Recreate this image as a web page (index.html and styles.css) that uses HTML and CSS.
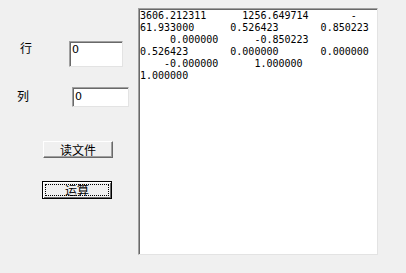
FILE: index.html
```html
<!DOCTYPE html>
<html lang="zh">
<head>
  <meta charset="UTF-8">
  <title>矩阵运算</title>
  <link rel="stylesheet" href="styles.css">
</head>
<body>
  <div class="ventana">
    <!-- Panel izquierdo: filas, columnas y botones -->
    <div class="panel">
      <div class="fila fila-hang">
        <span class="etiqueta">行</span>
        <input class="edit edit-alto" value="0">
      </div>
      <div class="fila fila-lie">
        <span class="etiqueta">列</span>
        <input class="edit edit-bajo" value="0">
      </div>
      <button class="boton boton-leer">读文件</button>
      <button class="boton boton-calc">运算</button>
    </div>
    <!-- Resultado -->
    <div class="salida">3606.212311      1256.649714       -
61.933000      0.526423       0.850223
     0.000000      -0.850223
0.526423       0.000000       0.000000
    -0.000000      1.000000
1.000000</div>
  </div>
</body>
</html>
```

FILE: styles.css
```css
/* Reset básico */
* {
  margin: 0;
  padding: 0;
  box-sizing: border-box;
}
body {
  background-color: #f0f0f0;
  font-family: "Noto Sans CJK SC", sans-serif;
  font-size: 12px;
  color: #000;
  width: 406px;
  height: 273px;
  overflow: hidden;
}
.ventana {
  display: flex;
  align-items: flex-start;
}
/* Panel de controles */
.panel {
  width: 138px;
  display: flex;
  flex-direction: column;
  align-items: flex-start;
}
.fila {
  display: flex;
  align-items: flex-start;
}
.fila-hang {
  margin-top: 41px;
}
.fila-lie {
  margin-top: 20px;
}
.etiqueta {
  width: 12px;
  line-height: 14px;
}
.fila-hang .etiqueta {
  margin-left: 20px;
  margin-top: 0;
}
.fila-lie .etiqueta {
  margin-left: 17px;
  margin-top: 2px;
}
/* Cajas de texto hundidas */
.edit {
  font-family: "DejaVu Sans", sans-serif;
  font-size: 11px;
  color: #000;
  background: #fff;
  border-top: 1px solid #a0a0a0;
  border-left: 1px solid #a0a0a0;
  border-right: 1px solid #e3e3e3;
  border-bottom: 1px solid #e3e3e3;
  box-shadow: inset 1px 1px 0 #696969;
  padding: 0 0 0 2px;
  outline: none;
}
.edit-alto {
  margin-left: 37px;
  width: 54px;
  height: 26px;
  padding-bottom: 10px;
}
.edit-bajo {
  margin-left: 43px;
  width: 57px;
  height: 20px;
  padding-bottom: 2px;
}
/* Botones */
.boton {
  font-family: "Noto Sans CJK SC", sans-serif;
  font-size: 12px;
  color: #000;
  width: 70px;
  background: #f0f0f0;
  border-top: 1px solid #fff;
  border-left: 1px solid #fff;
  border-right: 1px solid #696969;
  border-bottom: 1px solid #696969;
  box-shadow: inset -1px -1px 0 #a0a0a0;
  line-height: 14px;
}
.boton-leer {
  margin-top: 34px;
  margin-left: 43px;
  height: 17px;
}
.boton-calc {
  margin-top: 23px;
  margin-left: 42px;
  height: 18px;
  border: 1px solid #000;
  box-shadow: inset 1px 1px 0 #fff, inset -1px -1px 0 #696969;
  outline: 1px dotted #000;
  outline-offset: -4px;
}
/* Área de resultados */
.salida {
  margin-top: 8px;
  width: 240px;
  height: 247px;
  background: #fff;
  border-top: 1px solid #a0a0a0;
  border-left: 1px solid #a0a0a0;
  border-right: 1px solid #e3e3e3;
  border-bottom: 1px solid #e3e3e3;
  box-shadow: inset 1px 1px 0 #696969;
  padding: 1px 0 0 1px;
  font-family: "DejaVu Sans Mono", monospace;
  font-size: 10px;
  line-height: 12px;
  white-space: pre;
  overflow: hidden;
}
```
